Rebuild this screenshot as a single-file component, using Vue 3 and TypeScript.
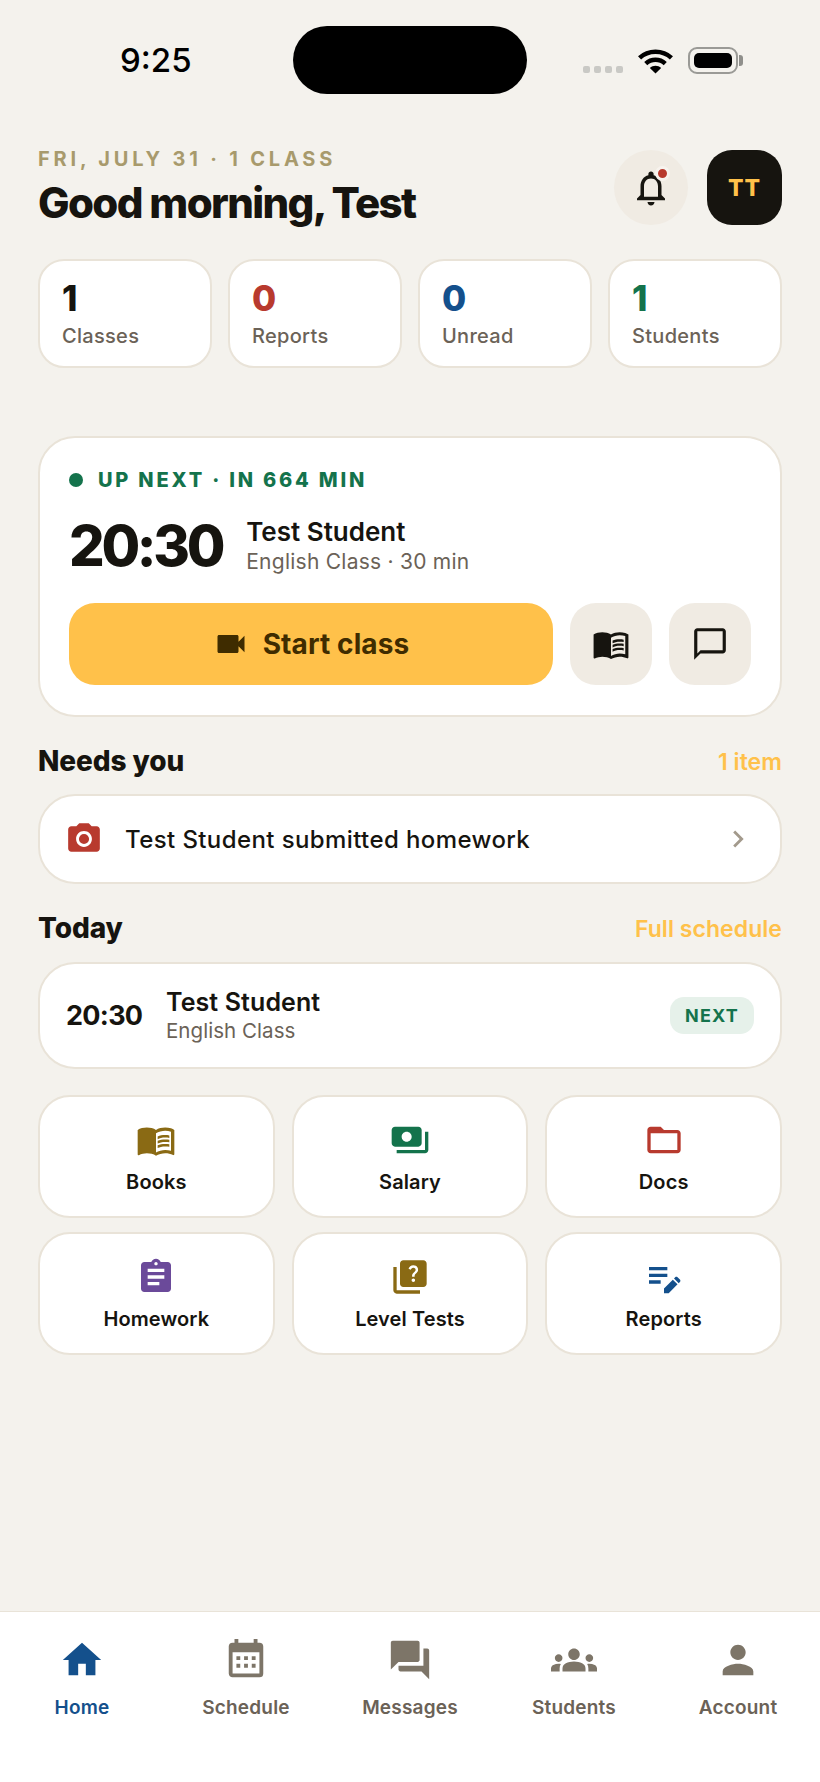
<script setup lang="ts">
interface Stat {
  value: string
  label: string
  color: string
}
interface Tile {
  label: string
  color: string
  paths: string[]
}
interface Tab {
  label: string
  paths: string[]
  active?: boolean
}

const stats: Stat[] = [
  { value: '1', label: 'Classes', color: '#16140f' },
  { value: '0', label: 'Reports', color: '#b83a2e' },
  { value: '0', label: 'Unread', color: '#14508c' },
  { value: '1', label: 'Students', color: '#14734c' }
]

const bookPaths = [
  'M21 5c-1.11-.35-2.33-.5-3.5-.5-1.95 0-4.05.4-5.5 1.5-1.45-1.1-3.55-1.5-5.5-1.5S2.45 4.9 1 6v14.65c0 .25.25.5.5.5.1 0 .15-.05.25-.05C3.1 20.45 5.05 20 6.5 20c1.95 0 4.05.4 5.5 1.5 1.35-.85 3.8-1.5 5.5-1.5 1.65 0 3.35.3 4.75 1.05.1.05.15.05.25.05.25 0 .5-.25.5-.5V6c-.6-.45-1.25-.75-2-1zm0 13.5c-1.1-.35-2.3-.5-3.5-.5-1.7 0-4.15.65-5.5 1.5V8c1.35-.85 3.8-1.5 5.5-1.5 1.2 0 2.4.15 3.5.5v11.5z',
  'M17.5 10.5c.88 0 1.73.09 2.5.26V9.24c-.79-.15-1.64-.24-2.5-.24-1.7 0-3.24.29-4.5.83v1.66c1.13-.64 2.7-.99 4.5-.99zM13 12.49v1.66c1.13-.64 2.7-.99 4.5-.99.88 0 1.73.09 2.5.26V11.9c-.79-.15-1.64-.24-2.5-.24-1.7 0-3.24.3-4.5.83zM17.5 14.33c-1.7 0-3.24.29-4.5.83v1.66c1.13-.64 2.7-.99 4.5-.99.88 0 1.73.09 2.5.26v-1.52c-.79-.16-1.64-.24-2.5-.24z'
]

const tiles: Tile[] = [
  { label: 'Books', color: '#8a6a14', paths: bookPaths },
  {
    label: 'Salary',
    color: '#14734c',
    paths: ['M19 14V6c0-1.1-.9-2-2-2H3c-1.1 0-2 .9-2 2v8c0 1.1.9 2 2 2h14c1.1 0 2-.9 2-2zm-9-1c-1.66 0-3-1.34-3-3s1.34-3 3-3 3 1.34 3 3-1.34 3-3 3zm13-6v11c0 1.1-.9 2-2 2H4v-2h17V7h2z']
  },
  {
    label: 'Docs',
    color: '#b83a2e',
    paths: ['M20 6h-8l-2-2H4c-1.1 0-1.99.9-1.99 2L2 18c0 1.1.9 2 2 2h16c1.1 0 2-.9 2-2V8c0-1.1-.9-2-2-2zm0 12H4V8h16v10z']
  },
  {
    label: 'Homework',
    color: '#6b4a9a',
    paths: ['M19 3h-4.18C14.4 1.84 13.3 1 12 1c-1.3 0-2.4.84-2.82 2H5c-1.1 0-2 .9-2 2v14c0 1.1.9 2 2 2h14c1.1 0 2-.9 2-2V5c0-1.1-.9-2-2-2zm-7 0c.55 0 1 .45 1 1s-.45 1-1 1-1-.45-1-1 .45-1 1-1zm2 14H7v-2h7v2zm3-4H7v-2h10v2zm0-4H7V7h10v2z']
  },
  {
    label: 'Level Tests',
    color: '#8a6a14',
    paths: ['M4 6H2v14c0 1.1.9 2 2 2h14v-2H4V6zm16-4H8c-1.1 0-2 .9-2 2v12c0 1.1.9 2 2 2h12c1.1 0 2-.9 2-2V4c0-1.1-.9-2-2-2zm-5.99 13c-.59 0-1.05-.47-1.05-1.05 0-.59.47-1.04 1.05-1.04.59 0 1.04.45 1.04 1.04-.01.58-.45 1.05-1.04 1.05zm2.5-6.17c-.63.93-1.23 1.21-1.56 1.81-.13.24-.18.4-.18 1.18h-1.52c0-.41-.06-1.08.26-1.65.41-.73 1.18-1.16 1.63-1.8.48-.68.21-1.94-1.14-1.94-.88 0-1.32.67-1.5 1.23l-1.37-.57C11.51 5.96 12.52 5 13.99 5c1.23 0 2.08.56 2.51 1.26.37.61.58 1.73.01 2.57z']
  },
  {
    label: 'Reports',
    color: '#14508c',
    paths: ['M3 10h11v2H3v-2zm0-2h11V6H3v2zm0 8h7v-2H3v2zm15.01-3.13.71-.71c.39-.39 1.02-.39 1.41 0l1.41 1.41c.39.39.39 1.02 0 1.41l-.71.71-2.82-2.82zM17.3 13.58 12 18.88V21.7h2.82l5.3-5.3-2.82-2.82z']
  }
]

const tabs: Tab[] = [
  { label: 'Home', active: true, paths: ['M10 20v-6h4v6h5v-8h3L12 3 2 12h3v8z'] },
  {
    label: 'Schedule',
    paths: ['M9 10v2H7v-2h2m4 0v2h-2v-2h2m4 0v2h-2v-2h2m2-7a2 2 0 0 1 2 2v14a2 2 0 0 1-2 2H5c-1.11 0-2-.9-2-2V5a2 2 0 0 1 2-2h1V1h2v2h8V1h2v2h1m0 16V8H5v11h14M9 14v2H7v-2h2m4 0v2h-2v-2h2m4 0v2h-2v-2h2z']
  },
  {
    label: 'Messages',
    paths: ['M21 6h-2v9H6v2c0 .55.45 1 1 1h11l4 4V7c0-.55-.45-1-1-1zm-4 6V3c0-.55-.45-1-1-1H3c-.55 0-1 .45-1 1v14l4-4h10c.55 0 1-.45 1-1z']
  },
  {
    label: 'Students',
    paths: ['M12 12.75c1.63 0 3.07.39 4.24.9 1.08.48 1.76 1.56 1.76 2.73V18H6v-1.61c0-1.18.68-2.26 1.76-2.73 1.17-.52 2.61-.91 4.24-.91zM4 13c1.1 0 2-.9 2-2s-.9-2-2-2-2 .9-2 2 .9 2 2 2zm1.13 1.1c-.37-.06-.74-.1-1.13-.1-.99 0-1.93.21-2.78.58C.48 14.9 0 15.62 0 16.43V18h4.5v-1.61c0-.83.23-1.61.63-2.29zM20 13c1.1 0 2-.9 2-2s-.9-2-2-2-2 .9-2 2 .9 2 2 2zm4 3.43c0-.81-.48-1.53-1.22-1.85-.85-.37-1.79-.58-2.78-.58-.39 0-.76.04-1.13.1.4.68.63 1.46.63 2.29V18H24v-1.57zM12 6c1.66 0 3 1.34 3 3s-1.34 3-3 3-3-1.34-3-3 1.34-3 3-3z']
  },
  {
    label: 'Account',
    paths: ['M12 12c2.21 0 4-1.79 4-4s-1.79-4-4-4-4 1.79-4 4 1.79 4 4 4zm0 2c-2.67 0-8 1.34-8 4v2h16v-2c0-2.66-5.33-4-8-4z']
  }
]
</script>

<template>
  <div class="screen">
    <div class="status-bar">
      <span class="clock">9:25</span>
      <div class="island"></div>
      <div class="status-icons">
        <div class="signal">
          <span v-for="n in 4" :key="n"></span>
        </div>
        <svg class="wifi" viewBox="0 0 36 27" aria-hidden="true">
          <path d="M2.5 11.5C11 3.5 25 3.5 33.5 11.5" fill="none" stroke="#000" stroke-width="4.4" />
          <path d="M8.5 17C14 12 22 12 27.5 17" fill="none" stroke="#000" stroke-width="4.4" />
          <path d="M12.5 21.2C15.5 18.4 20.5 18.4 23.5 21.2L18 26.6z" fill="#000" />
        </svg>
        <div class="battery"><span></span></div>
      </div>
    </div>

    <main class="content">
      <header class="greeting">
        <div>
          <div class="eyebrow">FRI, JULY 31 · 1 CLASS</div>
          <h1>Good morning, Test</h1>
        </div>
        <div class="greeting-actions">
          <button type="button" class="bell" aria-label="Notifications">
            <svg viewBox="0 0 24 24" width="42" height="42" fill="#16140f">
              <path d="M12 22c1.1 0 2-.9 2-2h-4c0 1.1.9 2 2 2zm6-6v-5c0-3.07-1.63-5.64-4.5-6.32V4c0-.83-.67-1.5-1.5-1.5s-1.5.67-1.5 1.5v.68C7.64 5.36 6 7.92 6 11v5l-2 2v1h16v-1l-2-2zm-2 1H8v-6c0-2.48 1.51-4.5 4-4.5s4 2.02 4 4.5v6z" />
            </svg>
            <span class="bell-dot"></span>
          </button>
          <div class="avatar">TT</div>
        </div>
      </header>

      <section class="stats">
        <div v-for="stat in stats" :key="stat.label" class="stat card">
          <strong :style="{ color: stat.color }">{{ stat.value }}</strong>
          <span>{{ stat.label }}</span>
        </div>
      </section>

      <section class="hero card">
        <div class="hero-label"><i></i>UP NEXT · IN 664 MIN</div>
        <div class="hero-info">
          <div class="hero-time">20:30</div>
          <div>
            <div class="hero-name">Test Student</div>
            <div class="hero-sub">English Class · 30 min</div>
          </div>
        </div>
        <div class="hero-actions">
          <button type="button" class="start">
            <svg viewBox="0 0 24 24" width="36" height="36" fill="#3f2c00">
              <path d="M17 10.5V7c0-.55-.45-1-1-1H4c-.55 0-1 .45-1 1v10c0 .55.45 1 1 1h12c.55 0 1-.45 1-1v-3.5l4 4v-11l-4 4z" />
            </svg>
            Start class
          </button>
          <button type="button" class="square" aria-label="Book">
            <svg viewBox="0 0 24 24" width="38" height="38" fill="#16140f">
              <path v-for="d in bookPaths" :key="d" :d="d" />
            </svg>
          </button>
          <button type="button" class="square" aria-label="Message">
            <svg viewBox="0 0 24 24" width="38" height="38" fill="#16140f">
              <path d="M20 2H4c-1.1 0-2 .9-2 2v18l4-4h14c1.1 0 2-.9 2-2V4c0-1.1-.9-2-2-2zm0 14H6l-2 2V4h16v12z" />
            </svg>
          </button>
        </div>
      </section>

      <div class="section-head">
        <h2>Needs you</h2>
        <a>1 item</a>
      </div>
      <div class="needs card">
        <svg viewBox="0 0 24 24" width="38" height="38" fill="#b83a2e">
          <path d="M12 15.2a3.2 3.2 0 1 0 0-6.4 3.2 3.2 0 0 0 0 6.4z" />
          <path d="M9 2 7.17 4H4c-1.1 0-2 .9-2 2v12c0 1.1.9 2 2 2h16c1.1 0 2-.9 2-2V6c0-1.1-.9-2-2-2h-3.17L15 2H9zm3 15c-2.76 0-5-2.24-5-5s2.24-5 5-5 5 2.24 5 5-2.24 5-5 5z" />
        </svg>
        <span class="needs-text">Test Student submitted homework</span>
        <svg viewBox="0 0 24 24" width="34" height="34" fill="#a39a8c">
          <path d="M10 6 8.59 7.41 13.17 12l-4.58 4.59L10 18l6-6z" />
        </svg>
      </div>

      <div class="section-head today-head">
        <h2>Today</h2>
        <a>Full schedule</a>
      </div>
      <div class="today card">
        <span class="today-time">20:30</span>
        <div class="today-info">
          <div class="today-name">Test Student</div>
          <div class="today-sub">English Class</div>
        </div>
        <span class="badge">NEXT</span>
      </div>

      <section class="tiles">
        <div v-for="tile in tiles" :key="tile.label" class="tile card">
          <svg viewBox="0 0 24 24" width="40" height="40" :fill="tile.color">
            <path v-for="d in tile.paths" :key="d" :d="d" />
          </svg>
          <span>{{ tile.label }}</span>
        </div>
      </section>
    </main>

    <nav class="tabbar">
      <div v-for="tab in tabs" :key="tab.label" class="tab" :class="{ active: tab.active }">
        <svg viewBox="0 0 24 24" width="46" height="46" fill="currentColor">
          <path v-for="d in tab.paths" :key="d" :d="d" />
        </svg>
        <span>{{ tab.label }}</span>
      </div>
    </nav>
  </div>
</template>

<style scoped>
.screen {
  display: flex;
  flex-direction: column;
  width: 820px;
  height: 1782px;
  overflow: hidden;
  background: #f4f2ed;
  color: #16140f;
  font-family: Inter, 'Liberation Sans', sans-serif;
}

.status-bar {
  display: grid;
  grid-template-columns: 293px 234px 1fr;
  align-items: center;
  height: 68px;
  margin-top: 26px;
}

.clock {
  padding-left: 120px;
  font-size: 33px;
  font-weight: 500;
  line-height: 1;
  color: #000;
}

.island {
  height: 68px;
  border-radius: 34px;
  background: #000;
}

.status-icons {
  display: flex;
  align-items: flex-end;
  height: 27px;
  padding-left: 56px;
}

.signal {
  display: flex;
  gap: 4px;
  margin-right: 14px;
  margin-bottom: 1px;
}

.signal span {
  width: 7px;
  height: 7px;
  border-radius: 2px;
  background: #c9c9c5;
}

.wifi {
  width: 37px;
  height: 28px;
  margin-right: 14px;
}

.battery {
  position: relative;
  width: 50px;
  height: 27px;
  padding: 4px;
  box-sizing: border-box;
  border: 2px solid #9a9a96;
  border-radius: 9px;
}

.battery::after {
  content: '';
  position: absolute;
  top: 6px;
  right: -7px;
  width: 4px;
  height: 11px;
  border-radius: 0 3px 3px 0;
  background: #8f8f8b;
}

.battery span {
  display: block;
  height: 100%;
  border-radius: 5px;
  background: #000;
}

.content {
  display: flex;
  flex: 1;
  flex-direction: column;
  min-height: 0;
  padding: 56px 38px 0;
}

.greeting {
  display: flex;
  justify-content: space-between;
  height: 75px;
}

.eyebrow {
  color: #a89a6c;
  font-size: 20px;
  font-weight: 700;
  line-height: 18px;
  letter-spacing: 3.8px;
}

h1 {
  margin: 11px 0 0;
  font-size: 42px;
  font-weight: 800;
  line-height: 48px;
  letter-spacing: -1.65px;
}

.greeting-actions {
  display: flex;
  gap: 19px;
}

.bell {
  position: relative;
  display: flex;
  align-items: center;
  justify-content: center;
  width: 74px;
  height: 75px;
  padding: 0;
  border: 0;
  border-radius: 50%;
  background: #f0ebe3;
}

.bell-dot {
  position: absolute;
  top: 16px;
  right: 18px;
  width: 9px;
  height: 9px;
  border: 3px solid #f7f3ee;
  border-radius: 50%;
  background: #b83a2e;
}

.avatar {
  display: flex;
  align-items: center;
  justify-content: center;
  width: 75px;
  height: 75px;
  border-radius: 25px;
  background: #16140f;
  color: #ffc14a;
  font-size: 23px;
  font-weight: 800;
  letter-spacing: 1px;
}

.card {
  box-sizing: border-box;
  border: 2px solid #e9e3d8;
  background: #fff;
}

.stats {
  display: grid;
  grid-template-columns: repeat(4, 1fr);
  gap: 16px;
  margin-top: 34px;
}

.stat {
  display: flex;
  flex-direction: column;
  height: 109px;
  padding: 19px 22px 0;
  border-radius: 26px;
}

.stat strong {
  font-size: 35px;
  font-weight: 800;
  line-height: 36px;
}

.stat span {
  margin-top: 8px;
  color: #6b6257;
  font-size: 20px;
  font-weight: 500;
  line-height: 24px;
  letter-spacing: 0.3px;
}

.hero {
  height: 281px;
  margin-top: 68px;
  padding: 30px 29px 0;
  border-radius: 37px;
}

.hero-label {
  display: flex;
  align-items: center;
  color: #14734c;
  font-size: 20px;
  font-weight: 800;
  line-height: 24px;
  letter-spacing: 2.8px;
}

.hero-label i {
  width: 14px;
  height: 14px;
  margin-right: 15px;
  border-radius: 50%;
  background: #14734c;
}

.hero-info {
  display: flex;
  align-items: center;
  gap: 24px;
  margin-top: 20px;
}

.hero-time {
  font-size: 56px;
  font-weight: 800;
  line-height: 68px;
  letter-spacing: -3.3px;
}

.hero-name {
  font-size: 26px;
  font-weight: 600;
  line-height: 30px;
}

.hero-sub {
  margin-top: 1px;
  color: #6b6257;
  font-size: 21px;
  line-height: 28px;
  letter-spacing: 0.25px;
}

.hero-actions {
  display: flex;
  gap: 17px;
  margin-top: 23px;
}

.start {
  display: flex;
  flex: 1;
  align-items: center;
  justify-content: center;
  gap: 14px;
  height: 82px;
  padding: 0;
  border: 0;
  border-radius: 26px;
  background: #ffc14a;
  color: #3f2c00;
  font-family: inherit;
  font-size: 28px;
  font-weight: 700;
  letter-spacing: 0.1px;
}

.square {
  display: flex;
  align-items: center;
  justify-content: center;
  width: 82px;
  height: 82px;
  padding: 0;
  border: 0;
  border-radius: 26px;
  background: #f0ebe3;
}

.section-head {
  display: flex;
  align-items: center;
  justify-content: space-between;
  height: 33px;
  margin-top: 28px;
  margin-bottom: 16px;
}

.today-head {
  margin-bottom: 17px;
}

h2 {
  margin: 0;
  font-size: 28px;
  font-weight: 800;
  line-height: 33px;
  letter-spacing: -0.1px;
}

.section-head a {
  color: #ffc14a;
  font-size: 23px;
  font-weight: 600;
  letter-spacing: 0.05px;
}

.needs {
  display: flex;
  align-items: center;
  height: 90px;
  padding: 0 25px;
  border-radius: 37px;
}

.needs-text {
  flex: 1;
  margin-left: 22px;
  font-size: 24px;
  font-weight: 500;
  letter-spacing: 0.4px;
}

.today {
  display: flex;
  align-items: center;
  height: 107px;
  padding: 0 26px;
  border-radius: 37px;
}

.today-time {
  width: 100px;
  font-size: 27px;
  font-weight: 700;
  letter-spacing: -0.7px;
}

.today-info {
  flex: 1;
}

.today-name {
  font-size: 25px;
  font-weight: 600;
  line-height: 30px;
  letter-spacing: 0.1px;
}

.today-sub {
  margin-top: 1px;
  color: #6b6257;
  font-size: 20.5px;
  line-height: 26px;
  letter-spacing: 0.05px;
}

.badge {
  display: flex;
  align-items: center;
  justify-content: center;
  width: 84px;
  height: 37px;
  border-radius: 14px;
  background: #e6f1ea;
  color: #14734c;
  font-size: 18px;
  font-weight: 700;
  letter-spacing: 1.2px;
}

.tiles {
  display: grid;
  grid-template-columns: repeat(3, 1fr);
  gap: 14px 17px;
  margin-top: 26px;
}

.tile {
  display: flex;
  flex-direction: column;
  align-items: center;
  height: 123px;
  padding-top: 23px;
  border-radius: 32px;
}

.tile span {
  margin-top: 10px;
  font-size: 20px;
  font-weight: 600;
  line-height: 24px;
  letter-spacing: 0.1px;
}

.tabbar {
  display: grid;
  grid-template-columns: repeat(5, 1fr);
  box-sizing: border-box;
  height: 171px;
  padding-top: 25px;
  border-top: 1px solid #e9e3d8;
  background: #fff;
}

.tab {
  display: flex;
  flex-direction: column;
  align-items: center;
  color: #7d7568;
}

.tab span {
  margin-top: 13px;
  color: #6b6257;
  font-size: 19px;
  font-weight: 600;
  line-height: 24px;
  letter-spacing: 0.2px;
}

.tab.active,
.tab.active span {
  color: #14508c;
}
</style>

<style>
html,
body {
  margin: 0;
  background: #f4f2ed;
}
</style>
